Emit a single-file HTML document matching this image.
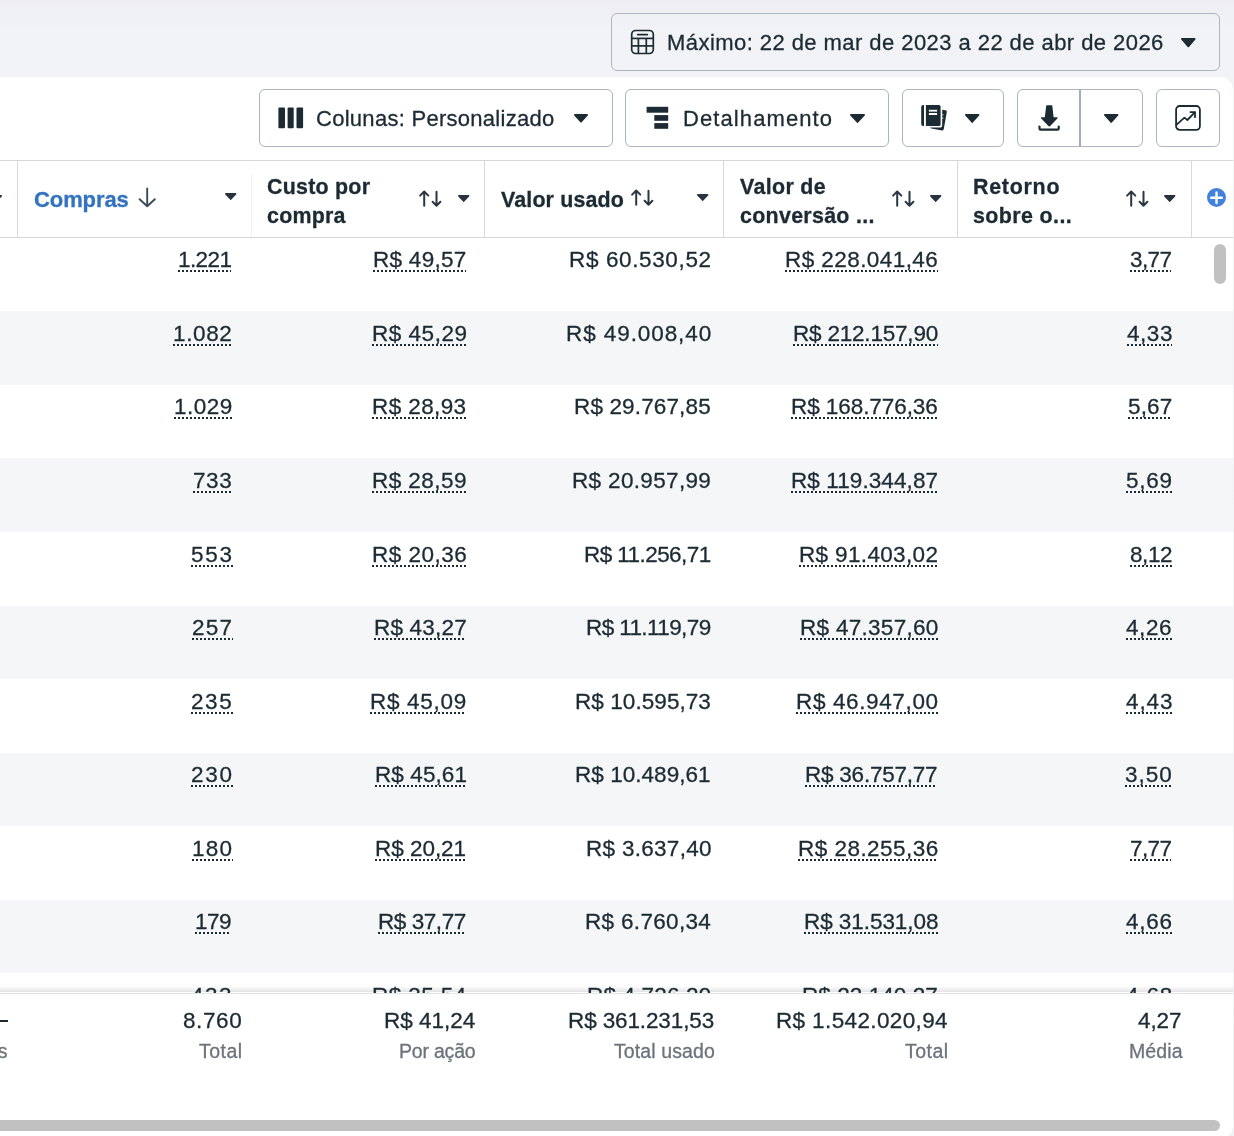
<!DOCTYPE html>
<html><head><meta charset="utf-8">
<style>
*{margin:0;padding:0;box-sizing:border-box}
html,body{width:1234px;height:1136px;overflow:hidden}
body{position:relative;font-family:"Liberation Sans",sans-serif;color:#1c2b33;background:linear-gradient(#efeff3,#f0f1f5 20px,#f2f3f7 30px,#f2f3f7 77px,#f0f2f5);}
.a{position:absolute}
.btn{position:absolute;border:1px solid #abb4bf;border-radius:6px;background:#fff}
.t{position:absolute;white-space:nowrap;font-size:22px;line-height:30px;height:30px}
.r{position:absolute;white-space:nowrap;font-size:22.5px;line-height:30px;height:30px;text-align:right}
.u{text-decoration:underline dotted #1c2b33;text-decoration-thickness:2px;text-underline-offset:3px}
.h{position:absolute;white-space:nowrap;font-size:21.4px;font-weight:bold;line-height:30px;height:30px}
.lb{position:absolute;white-space:nowrap;font-size:19.5px;line-height:30px;height:30px;text-align:right;color:#6c737a}
svg{position:absolute;overflow:visible}
.t,.r,.h,.lb{will-change:transform;-webkit-text-stroke:0.3px currentColor}
</style></head>
<body>

<div class="btn" style="left:611px;top:13px;width:609px;height:58px;background:transparent;border-color:#adb5c0"></div>
<svg style="left:630px;top:29px" width="26" height="26" viewBox="0 0 26 26" fill="none" stroke="#1c2b33" stroke-width="1.7" stroke-linecap="round"><rect x="1.7" y="1.5" width="21.6" height="23" rx="4"/><line x1="7.7" y1="5.6" x2="17.3" y2="5.6" stroke-width="1.9"/><line x1="1.7" y1="9.4" x2="23.3" y2="9.4" stroke-linecap="butt"/><line x1="1.7" y1="16.9" x2="23.3" y2="16.9" stroke-linecap="butt"/><line x1="8.4" y1="9.4" x2="8.4" y2="24.5" stroke-linecap="butt"/><line x1="16.3" y1="9.4" x2="16.3" y2="24.5" stroke-linecap="butt"/></svg>
<div class="t" style="left:666.8px;top:28px;letter-spacing:0.44px">Máximo: 22 de mar de 2023 a 22 de abr de 2026</div>
<div class="a" style="left:-20px;top:76.5px;width:1252.6px;height:1061.5px;background:#fff;border-radius:0 12.5px 12px 0"></div>
<svg style="left:1180.70px;top:38.00px" width="14.60" height="9.40" viewBox="0 0 14.60 9.40"><path d="M0.90 0.90 H13.70 L7.30 8.41 Z" fill="#1c2b33" stroke="#1c2b33" stroke-width="1.80" stroke-linejoin="round"/></svg>
<div class="btn" style="left:259px;top:89px;width:354px;height:58px"></div>
<svg style="left:277.5px;top:107px" width="26" height="22" viewBox="0 0 26 22" fill="#1c2b33"><rect x="0.4" y="0.5" width="6.6" height="20.8" rx="1"/><rect x="9.6" y="0.5" width="6.1" height="20.8" rx="1"/><rect x="18.5" y="0.5" width="6.6" height="20.8" rx="1"/></svg>
<div class="t" style="left:315.5px;top:104px;letter-spacing:0.28px">Colunas: Personalizado</div>
<svg style="left:573.50px;top:114.30px" width="14.00" height="8.60" viewBox="0 0 14.00 8.60"><path d="M0.90 0.90 H13.10 L7.00 7.61 Z" fill="#1c2b33" stroke="#1c2b33" stroke-width="1.80" stroke-linejoin="round"/></svg>
<div class="btn" style="left:625px;top:89px;width:264px;height:58px"></div>
<svg style="left:646px;top:106px" width="24" height="24" viewBox="0 0 24 24" fill="#1c2b33"><rect x="0.6" y="0.8" width="21.6" height="5.9"/><rect x="8.3" y="9.1" width="13.9" height="5.7"/><rect x="8.3" y="17.1" width="13.9" height="5.7"/></svg>
<div class="t" style="left:682.5px;top:104px;letter-spacing:1.09px">Detalhamento</div>
<svg style="left:849.50px;top:114.30px" width="15.00" height="9.00" viewBox="0 0 15.00 9.00"><path d="M0.90 0.90 H14.10 L7.50 8.01 Z" fill="#1c2b33" stroke="#1c2b33" stroke-width="1.80" stroke-linejoin="round"/></svg>
<div class="btn" style="left:902px;top:89px;width:102px;height:58px"></div>
<svg style="left:920px;top:104px" width="30" height="30" viewBox="0 0 30 30" fill="#1c2b33"><rect x="11.6" y="5.15" width="13.8" height="20.5" rx="1.6" transform="rotate(10 18.5 15.4)"/><rect x="4.4" y="-0.5" width="17.8" height="24.1" rx="2.6" fill="#fff"/><path d="M3.2 1.1 H4 V22 H3.2 Q1.2 22 1.2 20 V3.1 Q1.2 1.1 3.2 1.1Z"/><path d="M5.9 1.1 H19 Q20.6 1.1 20.6 2.7 V20.4 Q20.6 22 19 22 H5.9Z"/><rect x="8.9" y="5.8" width="8.2" height="1.8" fill="#fff"/><rect x="8.9" y="9" width="8.2" height="2" fill="#fff"/><path d="M22.2 10.8 H23.4 M22.2 14 H23.4" stroke="#fff" stroke-width="1"/></svg>
<svg style="left:964.80px;top:114.00px" width="14.40" height="9.00" viewBox="0 0 14.40 9.00"><path d="M0.90 0.90 H13.50 L7.20 8.01 Z" fill="#1c2b33" stroke="#1c2b33" stroke-width="1.80" stroke-linejoin="round"/></svg>
<div class="btn" style="left:1017px;top:89px;width:126px;height:58px"></div>
<div class="a" style="left:1079.3px;top:90px;width:1.8px;height:56px;background:#a3adb8"></div>
<svg style="left:1036px;top:103px" width="26" height="30" viewBox="0 0 26 30" fill="#1c2b33"><path d="M10.2 2.8 Q10.3 2.2 11 2.2 H15.6 Q16.3 2.2 16.3 2.8 L17.6 14.3 H20.9 Q22.4 14.3 21.4 15.4 L14.2 23.1 Q13.3 24 12.4 23.1 L5.2 15.4 Q4.2 14.3 5.7 14.3 H8.8 Z"/><path d="M3.5 23.6 V25.6 Q3.5 26.7 4.6 26.7 H21.6 Q22.7 26.7 22.7 25.6 V23.6" fill="none" stroke="#1c2b33" stroke-width="2.2" stroke-linecap="round"/></svg>
<svg style="left:1103.80px;top:114.00px" width="14.40" height="9.00" viewBox="0 0 14.40 9.00"><path d="M0.90 0.90 H13.50 L7.20 8.01 Z" fill="#1c2b33" stroke="#1c2b33" stroke-width="1.80" stroke-linejoin="round"/></svg>
<div class="btn" style="left:1156px;top:89px;width:64px;height:58px"></div>
<svg style="left:1174px;top:104px" width="28" height="28" viewBox="0 0 28 28" fill="none" stroke="#1c2b33" stroke-width="1.8" stroke-linecap="round" stroke-linejoin="round"><rect x="2.1" y="2" width="23.8" height="23.8" rx="3.6"/><path d="M2.4 20.8 L10.4 13.6 L13.4 16 L20.8 8.4"/><path d="M16.4 8.1 H21 V13.2"/></svg>
<div class="a" style="left:0;top:160px;width:1233px;height:1px;background:#d6d6d6"></div>
<div class="a" style="left:17.0px;top:161px;width:1px;height:76px;background:#d5dae0"></div>
<div class="a" style="left:484.0px;top:161px;width:1px;height:76px;background:#d5dae0"></div>
<div class="a" style="left:722.5px;top:161px;width:1px;height:76px;background:#d5dae0"></div>
<div class="a" style="left:956.5px;top:161px;width:1px;height:76px;background:#d5dae0"></div>
<div class="a" style="left:1190.5px;top:161px;width:1px;height:76px;background:#d5dae0"></div>
<div class="a" style="left:251px;top:173px;width:1px;height:64px;background:#f1f2f3"></div>
<svg style="left:-10.00px;top:194.50px" width="12.00" height="7.00" viewBox="0 0 12.00 7.00"><path d="M0.90 0.90 H11.10 L6.00 6.01 Z" fill="#28343d" stroke="#28343d" stroke-width="1.80" stroke-linejoin="round"/></svg>
<div class="h" style="left:34px;top:184.5px;color:#3373c0;font-size:22px;letter-spacing:-0.1px">Compras</div>
<svg style="left:138px;top:187px" width="18" height="21" viewBox="0 0 18 21" fill="none" stroke="#3b4a56" stroke-width="1.9" stroke-linecap="round" stroke-linejoin="round"><path d="M9.2 1.5 V19.2 M1.6 12.2 L9.2 19.3 L16.8 12.2"/></svg>
<svg style="left:225.00px;top:193.30px" width="11.40" height="7.00" viewBox="0 0 11.40 7.00"><path d="M0.90 0.90 H10.50 L5.70 6.01 Z" fill="#28343d" stroke="#28343d" stroke-width="1.80" stroke-linejoin="round"/></svg>
<div class="h" style="left:266.5px;top:172px;letter-spacing:0.25px">Custo por</div>
<div class="h" style="left:266.5px;top:200.5px;letter-spacing:0.25px">compra</div>
<svg style="left:417.7px;top:189.2px" width="26" height="20" viewBox="0 0 26 20" fill="none" stroke="#2b3740" stroke-width="2" stroke-linecap="round" stroke-linejoin="round"><path d="M6.2 2.5 V16.8 M2.1 6.6 L6.2 2.5 L10.3 6.6 M18.5 2.8 V16.7 M14.6 12.8 L18.5 16.7 L22.4 12.8"/></svg>
<svg style="left:458.00px;top:194.80px" width="11.40" height="7.00" viewBox="0 0 11.40 7.00"><path d="M0.90 0.90 H10.50 L5.70 6.01 Z" fill="#28343d" stroke="#28343d" stroke-width="1.80" stroke-linejoin="round"/></svg>
<div class="h" style="left:500.5px;top:184.7px;letter-spacing:0.15px">Valor usado</div>
<svg style="left:629.9px;top:188.2px" width="26" height="20" viewBox="0 0 26 20" fill="none" stroke="#2b3740" stroke-width="2" stroke-linecap="round" stroke-linejoin="round"><path d="M6.2 2.5 V16.8 M2.1 6.6 L6.2 2.5 L10.3 6.6 M18.5 2.8 V16.7 M14.6 12.8 L18.5 16.7 L22.4 12.8"/></svg>
<svg style="left:697.00px;top:193.50px" width="11.40" height="7.00" viewBox="0 0 11.40 7.00"><path d="M0.90 0.90 H10.50 L5.70 6.01 Z" fill="#28343d" stroke="#28343d" stroke-width="1.80" stroke-linejoin="round"/></svg>
<div class="h" style="left:739.5px;top:172px;letter-spacing:0.35px">Valor de</div>
<div class="h" style="left:739.5px;top:200.5px;letter-spacing:0.3px">conversão ...</div>
<svg style="left:890.5px;top:189.2px" width="26" height="20" viewBox="0 0 26 20" fill="none" stroke="#2b3740" stroke-width="2" stroke-linecap="round" stroke-linejoin="round"><path d="M6.2 2.5 V16.8 M2.1 6.6 L6.2 2.5 L10.3 6.6 M18.5 2.8 V16.7 M14.6 12.8 L18.5 16.7 L22.4 12.8"/></svg>
<svg style="left:930.00px;top:194.80px" width="11.40" height="7.00" viewBox="0 0 11.40 7.00"><path d="M0.90 0.90 H10.50 L5.70 6.01 Z" fill="#28343d" stroke="#28343d" stroke-width="1.80" stroke-linejoin="round"/></svg>
<div class="h" style="left:972.5px;top:172px;letter-spacing:0.75px">Retorno</div>
<div class="h" style="left:973px;top:200.5px;letter-spacing:0.4px">sobre o...</div>
<svg style="left:1124.5px;top:189.2px" width="26" height="20" viewBox="0 0 26 20" fill="none" stroke="#2b3740" stroke-width="2" stroke-linecap="round" stroke-linejoin="round"><path d="M6.2 2.5 V16.8 M2.1 6.6 L6.2 2.5 L10.3 6.6 M18.5 2.8 V16.7 M14.6 12.8 L18.5 16.7 L22.4 12.8"/></svg>
<svg style="left:1164.00px;top:194.80px" width="11.40" height="7.00" viewBox="0 0 11.40 7.00"><path d="M0.90 0.90 H10.50 L5.70 6.01 Z" fill="#28343d" stroke="#28343d" stroke-width="1.80" stroke-linejoin="round"/></svg>
<svg style="left:1207px;top:188px" width="20" height="20" viewBox="0 0 20 20"><circle cx="9.5" cy="9.4" r="9.5" fill="#4382dc"/><path d="M9.5 4.4 V15 M4.2 9.7 H14.8" stroke="#fff" stroke-width="2.4" stroke-linecap="round"/></svg>
<div class="a" style="left:0;top:311.18px;width:1233px;height:73.58px;background:#f5f6f8"></div>
<div class="a" style="left:0;top:458.34px;width:1233px;height:73.58px;background:#f5f6f8"></div>
<div class="a" style="left:0;top:605.50px;width:1233px;height:73.58px;background:#f5f6f8"></div>
<div class="a" style="left:0;top:752.66px;width:1233px;height:73.58px;background:#f5f6f8"></div>
<div class="a" style="left:0;top:899.82px;width:1233px;height:73.58px;background:#f5f6f8"></div>
<div class="a" style="left:0;top:237px;width:1233px;height:1px;background:#d6d6d6"></div>
<div class="a" style="left:0;top:985.5px;width:1233px;height:6.5px;background:linear-gradient(rgba(0,0,0,0),rgba(0,0,0,0.11))"></div>
<div class="a" style="left:0;top:992px;width:1233px;height:1px;background:#fff"></div>
<div class="a" style="left:0;top:237.60px;width:1233px;height:755.40px;overflow:hidden">
<div class="r u" style="right:1001.60px;top:7.60px;letter-spacing:-0.60px">1.221</div>
<div class="r u" style="right:766.22px;top:7.60px;letter-spacing:0.28px">R$ 49,57</div>
<div class="r" style="right:521.37px;top:7.60px;letter-spacing:0.63px">R$ 60.530,52</div>
<div class="r u" style="right:294.57px;top:7.60px;letter-spacing:0.43px">R$ 228.041,46</div>
<div class="r u" style="right:61.60px;top:7.60px;letter-spacing:-0.60px">3,77</div>
<div class="r u" style="right:1000.38px;top:81.18px;letter-spacing:0.62px">1.082</div>
<div class="r u" style="right:765.99px;top:81.18px;letter-spacing:0.52px">R$ 45,29</div>
<div class="r" style="right:521.08px;top:81.18px;letter-spacing:0.92px">R$ 49.008,40</div>
<div class="r u" style="right:295.20px;top:81.18px;letter-spacing:-0.20px">R$ 212.157,90</div>
<div class="r u" style="right:60.46px;top:81.18px;letter-spacing:0.54px">4,33</div>
<div class="r u" style="right:1000.49px;top:154.76px;letter-spacing:0.51px">1.029</div>
<div class="r u" style="right:766.10px;top:154.76px;letter-spacing:0.40px">R$ 28,93</div>
<div class="r" style="right:521.86px;top:154.76px;letter-spacing:0.14px">R$ 29.767,85</div>
<div class="r u" style="right:295.07px;top:154.76px;letter-spacing:-0.07px">R$ 168.776,36</div>
<div class="r u" style="right:60.87px;top:154.76px;letter-spacing:0.13px">5,67</div>
<div class="r u" style="right:1000.39px;top:228.34px;letter-spacing:0.61px">733</div>
<div class="r u" style="right:766.05px;top:228.34px;letter-spacing:0.45px">R$ 28,59</div>
<div class="r" style="right:521.65px;top:228.34px;letter-spacing:0.34px">R$ 20.957,99</div>
<div class="r u" style="right:294.91px;top:228.34px;letter-spacing:0.09px">R$ 119.344,87</div>
<div class="r u" style="right:60.24px;top:228.34px;letter-spacing:0.76px">5,69</div>
<div class="r u" style="right:999.30px;top:301.92px;letter-spacing:1.70px">553</div>
<div class="r u" style="right:766.00px;top:301.92px;letter-spacing:0.50px">R$ 20,36</div>
<div class="r" style="right:522.57px;top:301.92px;letter-spacing:-0.57px">R$ 11.256,71</div>
<div class="r u" style="right:294.65px;top:301.92px;letter-spacing:0.35px">R$ 91.403,02</div>
<div class="r u" style="right:61.44px;top:301.92px;letter-spacing:-0.44px">8,12</div>
<div class="r u" style="right:999.79px;top:375.50px;letter-spacing:1.21px">257</div>
<div class="r u" style="right:766.30px;top:375.50px;letter-spacing:0.20px">R$ 43,27</div>
<div class="r" style="right:522.60px;top:375.50px;letter-spacing:-0.60px">R$ 11.119,79</div>
<div class="r u" style="right:294.71px;top:375.50px;letter-spacing:0.29px">R$ 47.357,60</div>
<div class="r u" style="right:60.42px;top:375.50px;letter-spacing:0.58px">4,26</div>
<div class="r u" style="right:999.41px;top:449.08px;letter-spacing:1.59px">235</div>
<div class="r u" style="right:765.80px;top:449.08px;letter-spacing:0.69px">R$ 45,09</div>
<div class="r" style="right:521.93px;top:449.08px;letter-spacing:0.07px">R$ 10.595,73</div>
<div class="r u" style="right:294.37px;top:449.08px;letter-spacing:0.63px">R$ 46.947,00</div>
<div class="r u" style="right:60.10px;top:449.08px;letter-spacing:0.90px">4,43</div>
<div class="r u" style="right:999.30px;top:522.66px;letter-spacing:1.70px">230</div>
<div class="r u" style="right:766.41px;top:522.66px;letter-spacing:0.09px">R$ 45,61</div>
<div class="r" style="right:521.96px;top:522.66px;letter-spacing:0.04px">R$ 10.489,61</div>
<div class="r u" style="right:295.23px;top:522.66px;letter-spacing:-0.23px">R$ 36.757,77</div>
<div class="r u" style="right:60.00px;top:522.66px;letter-spacing:1.00px">3,50</div>
<div class="r u" style="right:999.82px;top:596.24px;letter-spacing:1.18px">180</div>
<div class="r u" style="right:766.53px;top:596.24px;letter-spacing:-0.03px">R$ 20,21</div>
<div class="r" style="right:521.71px;top:596.24px;letter-spacing:0.29px">R$ 3.637,40</div>
<div class="r u" style="right:294.53px;top:596.24px;letter-spacing:0.47px">R$ 28.255,36</div>
<div class="r u" style="right:61.60px;top:596.24px;letter-spacing:-0.60px">7,77</div>
<div class="r u" style="right:1001.50px;top:669.82px;letter-spacing:-0.49px">179</div>
<div class="r u" style="right:766.94px;top:669.82px;letter-spacing:-0.44px">R$ 37,77</div>
<div class="r" style="right:521.68px;top:669.82px;letter-spacing:0.32px">R$ 6.760,34</div>
<div class="r u" style="right:295.06px;top:669.82px;letter-spacing:-0.06px">R$ 31.531,08</div>
<div class="r u" style="right:60.28px;top:669.82px;letter-spacing:0.72px">4,66</div>
<div class="r u" style="right:999.48px;top:743.40px;letter-spacing:1.52px">433</div>
<div class="r u" style="right:766.07px;top:743.40px;letter-spacing:0.43px">R$ 35,54</div>
<div class="r" style="right:521.84px;top:743.40px;letter-spacing:0.16px">R$ 4.726,29</div>
<div class="r u" style="right:294.94px;top:743.40px;letter-spacing:0.06px">R$ 22.140,27</div>
<div class="r u" style="right:60.18px;top:743.40px;letter-spacing:0.82px">4,68</div>
</div>
<div class="a" style="left:0;top:993px;width:1233px;height:1px;background:#e2e3e5"></div>
<div class="a" style="left:-2px;top:1020px;width:10px;height:2.4px;background:#1c2b33"></div>
<div class="lb" style="right:1226px;top:1036px;text-align:left">Resultados</div>
<div class="r" style="right:991.89px;top:1005.7px;letter-spacing:0.61px">8.760</div>
<div class="lb" style="right:991.30px;top:1036px;letter-spacing:0.50px">Total</div>
<div class="r" style="right:759.01px;top:1005.7px;letter-spacing:-0.01px">R$ 41,24</div>
<div class="lb" style="right:758.50px;top:1036px;letter-spacing:-0.20px">Por ação</div>
<div class="r" style="right:520.12px;top:1005.7px;letter-spacing:-0.12px">R$ 361.231,53</div>
<div class="lb" style="right:519.20px;top:1036px;letter-spacing:0.10px">Total usado</div>
<div class="r" style="right:286.13px;top:1005.7px;letter-spacing:0.37px">R$ 1.542.020,94</div>
<div class="lb" style="right:285.30px;top:1036px;letter-spacing:0.50px">Total</div>
<div class="r" style="right:52.60px;top:1005.7px;letter-spacing:-0.10px">4,27</div>
<div class="lb" style="right:51.70px;top:1036px;letter-spacing:0.10px">Média</div>
<div class="a" style="left:1214px;top:244px;width:12px;height:40px;border-radius:6px;background:#c1c1c1"></div>
<div class="a" style="left:-10px;top:1120px;width:1230px;height:11px;border-radius:6px;background:#c1c1c1"></div>
</body></html>
